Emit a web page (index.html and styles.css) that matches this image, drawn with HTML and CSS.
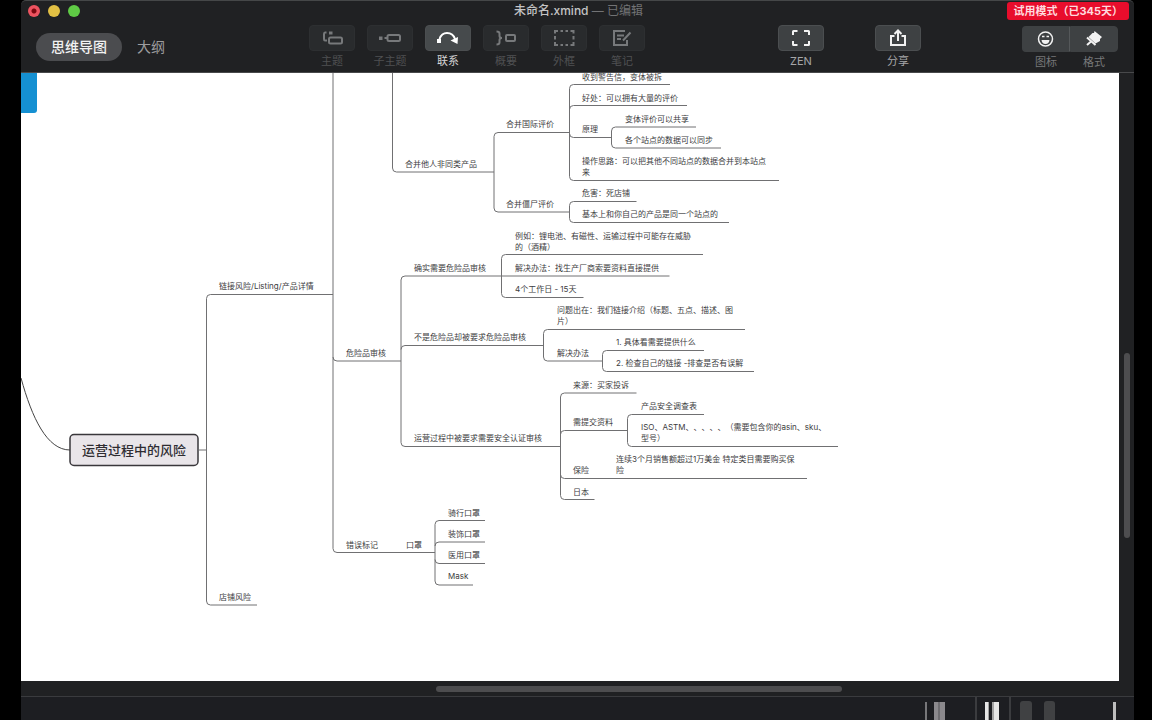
FILE: index.html
```html
<!DOCTYPE html>
<html lang="zh-CN">
<head>
<meta charset="utf-8">
<title>未命名.xmind</title>
<link rel="stylesheet" href="styles.css">
</head>
<body>
<div class="window">
  <header class="header">
    <div class="titlebar">
      <div class="lights">
        <button class="light light-close" aria-label="关闭"></button>
        <button class="light light-min" aria-label="最小化"></button>
        <button class="light light-max" aria-label="缩放"></button>
      </div>
      <h1 class="title">未命名.xmind <span class="edited">— 已编辑</span></h1>
      <div class="trial">试用模式（已345天）</div>
    </div>
    <div class="toolbar">
      <nav class="tabs">
        <button class="tab tab-active">思维导图</button>
        <button class="tab">大纲</button>
      </nav>
      <div class="tools">
        <button class="tool tool-off">
          <span class="key"><svg width="24" height="20" viewBox="0 0 24 20"><path d="M6.500 4.500H5Q4 4.500 4 6V11Q4 12.500 5 12.500H7"/><rect x="9" y="9.500" width="13" height="6" rx="1.500"/><path class="solid" d="M9 3.500h3.500v3H9z"/></svg></span>
          <span>主题</span>
        </button>
        <button class="tool tool-off">
          <span class="key"><svg width="24" height="20" viewBox="0 0 24 20"><path class="solid" d="M1 8.500h3.500V12H1z"/><path d="M6.500 10h3"/><rect x="9.500" y="7" width="12.500" height="6" rx="1.500"/></svg></span>
          <span>子主题</span>
        </button>
        <button class="tool tool-on">
          <span class="key"><svg width="24" height="20" viewBox="0 0 24 20"><path class="thick" d="M3.500 11Q5.500 5 11 5Q17 5 19 11"/><path class="solid" d="M1 11h4v4H1zM14.500 12.500l7.500-3.500-.5 7z"/></svg></span>
          <span>联系</span>
        </button>
        <button class="tool tool-off">
          <span class="key"><svg width="24" height="20" viewBox="0 0 24 20"><path d="M2.500 3.500Q5.500 3.500 5.500 5.500V8Q5.500 10 8 10Q5.500 10 5.500 12V14.500Q5.500 16.500 2.500 16.500"/><rect x="12" y="7" width="9" height="6" rx="1"/></svg></span>
          <span>概要</span>
        </button>
        <button class="tool tool-off">
          <span class="key"><svg width="24" height="20" viewBox="0 0 24 20"><path d="M3 5.500V3h3M8.500 3h2.500M13.500 3H16M18.500 3h3v2.500M21.500 8v3.500M21.500 14v3h-3M16 17h-2.500M11 17H8.500M6 17H3v-3M3 11.500V8"/></svg></span>
          <span>外框</span>
        </button>
        <button class="tool tool-off">
          <span class="key"><svg width="24" height="20" viewBox="0 0 24 20"><path d="M15 3H4V17H17V12M7 7.500h7M7 11h4M20.500 4.500L13 12.500"/></svg></span>
          <span>笔记</span>
        </button>
      </div>
      <div class="actions">
        <button class="tool">
          <span class="key"><svg width="24" height="20" viewBox="0 0 24 20"><path class="thick" d="M4 7V3.500Q4 3 4.500 3H8.500M15 3h4.500Q20 3 20 3.500V7M20 13v3.500Q20 17 19.500 17H15M8.500 17H4.500Q4 17 4 16.500V13"/></svg></span>
          <span>ZEN</span>
        </button>
        <button class="tool">
          <span class="key"><svg width="24" height="20" viewBox="0 0 24 20"><path class="thick" d="M8.500 8H5V17H19V8H15.500M12 13V3.500M8.500 6L12 2.500l3.500 3.500"/></svg></span>
          <span>分享</span>
        </button>
      </div>
      <div class="panels">
        <button class="panel">
          <span class="key"><svg width="24" height="20" viewBox="0 0 24 20"><circle cx="11.500" cy="10" r="7"/><path class="solid" d="M7.500 11h8q-.5 4-4 4t-4-4z"/><path d="M8 7.500h2.500M12.500 7.500H15"/></svg></span>
          <span>图标</span>
        </button>
        <button class="panel">
          <span class="key"><svg width="24" height="20" viewBox="0 0 24 20"><path class="solid" d="M12.500 2l7.500 6-2 2v2L13.500 14.500 6.500 8l4-4h1.500z"/><path class="thick" d="M5 8.500l8.500 7.500M9 12.500L5 16"/></svg></span>
          <span>格式</span>
        </button>
      </div>
    </div>
  </header>

  <main class="workspace">
    <svg class="canvas" role="img" aria-label="思维导图画布">
      <g transform="translate(-21 -73)">
        <path class="blue" d="M21 73H37V110Q37 113 34 113H21Z"/>

        <g class="links">
          <path class="main-link" d="M21 378C32 418 47 450 70 450"/>
          <path d="M199 450H206.500M333 294.500H210.500Q206.500 294.500 206.500 298.500V601Q206.500 605 210.500 605H257"/>
          <path d="M333 73V548.500Q333 552.500 337 552.500H435M333 357Q333 361 337 361H401"/>
          <path d="M392.500 73V168Q392.500 172 396.500 172H494"/>
          <path d="M569.500 132.500H498Q494 132.500 494 136.500V208Q494 212 498 212H569.500"/>
          <path d="M670 84.500H573.500Q569.500 84.500 569.500 88.500V176.500Q569.500 180.500 573.500 180.500H779M569.500 109.500Q569.500 105.500 573.500 105.500H687M569.500 133.500Q569.500 137.500 573.500 137.500H611.500"/>
          <path d="M696 127H615.500Q611.500 127 611.500 131V144Q611.500 148 615.500 148H721"/>
          <path d="M636.500 201.500H573.500Q569.500 201.500 569.500 205.500V218.500Q569.500 222.500 573.500 222.500H729"/>
          <path d="M669.500 276H405Q401 276 401 280V442.500Q401 446.500 405 446.500H560.500M401 349.500Q401 345.500 405 345.500H543.500"/>
          <path d="M703 254.500H505.500Q501.500 254.500 501.500 258.500V293.500Q501.500 297.500 505.500 297.500H583.500"/>
          <path d="M745 329.500H547.500Q543.500 329.500 543.500 333.500V357Q543.500 361 547.500 361H602.500"/>
          <path d="M704 350.500H606.500Q602.500 350.500 602.500 354.500V367.500Q602.500 371.500 606.500 371.500H754"/>
          <path d="M636.500 393H564.500Q560.500 393 560.500 397V495.500Q560.500 499.500 564.500 499.500H594.500M560.500 434.500Q560.500 430.500 564.500 430.500H627.500M560.500 474.500Q560.500 478.500 564.500 478.500H807"/>
          <path d="M704 414.500H631.500Q627.500 414.500 627.500 418.500V442.500Q627.500 446.500 631.500 446.500H838"/>
          <path d="M485 520.500H439Q435 520.500 435 524.500V581Q435 585 439 585H473M435 546Q435 542 439 542H485M435 559.500Q435 563.500 439 563.500H485"/>
        </g>

        <rect class="topic-box" x="70" y="434.500" width="128" height="31" rx="4"/>
        <text class="topic-main" x="134" y="455">运营过程中的风险</text>

        <g class="topics">
          <text x="219" y="289">链接风险/Listing/产品详情</text>
          <text x="219" y="600">店铺风险</text>
          <text x="346" y="356">危险品审核</text>
          <text x="346" y="548">错误标记</text>
          <text x="406" y="548">口罩</text>

          <text x="405" y="167">合并他人非同类产品</text>
          <text x="506" y="127">合并国际评价</text>
          <text x="506" y="207">合并僵尸评价</text>
          <text x="582" y="80">收到警告信，变体被拆</text>
          <text x="582" y="101">好处：可以拥有大量的评价</text>
          <text x="582" y="132">原理</text>
          <text x="625" y="122">变体评价可以共享</text>
          <text x="625" y="143">各个站点的数据可以同步</text>
          <text x="582" y="164">操作思路：可以把其他不同站点的数据合并到本站点<tspan x="582" dy="11">来</tspan></text>
          <text x="582" y="196">危害：死店铺</text>
          <text x="582" y="217">基本上和你自己的产品是同一个站点的</text>

          <text x="414" y="271">确实需要危险品审核</text>
          <text x="515" y="239">例如：锂电池、有磁性、运输过程中可能存在威胁<tspan x="515" dy="11">的（酒精）</tspan></text>
          <text x="515" y="271">解决办法：找生产厂商索要资料直接提供</text>
          <text x="515" y="292">4个工作日 - 15天</text>

          <text x="414" y="340">不是危险品却被要求危险品审核</text>
          <text x="557" y="313">问题出在：我们链接介绍（标题、五点、描述、图<tspan x="557" dy="11">片）</tspan></text>
          <text x="557" y="356">解决办法</text>
          <text x="616" y="345">1. 具体看需要提供什么</text>
          <text x="616" y="366">2. 检查自己的链接 -排查是否有误解</text>

          <text x="414" y="441">运营过程中被要求需要安全认证审核</text>
          <text x="573" y="388">来源：买家投诉</text>
          <text x="573" y="425">需提交资料</text>
          <text x="641" y="409">产品安全调查表</text>
          <text x="641" y="430">ISO、ASTM、、、、、（需要包含你的asin、sku、<tspan x="641" dy="11">型号）</tspan></text>
          <text x="573" y="473">保险</text>
          <text x="616" y="462">连续3个月销售额超过1万美金 特定类目需要购买保<tspan x="616" dy="11">险</tspan></text>
          <text x="573" y="495">日本</text>

          <text x="448" y="516">骑行口罩</text>
          <text x="448" y="537">装饰口罩</text>
          <text x="448" y="558">医用口罩</text>
          <text x="448" y="579">Mask</text>
        </g>
      </g>
    </svg>
    <div class="scroll-y"><div class="thumb-y"></div></div>
    <div class="scroll-x"><div class="thumb-x"></div></div>
  </main>

  <footer class="status">
    <svg width="212" height="23" viewBox="0 0 212 23" aria-hidden="true">
      <path fill="#77777a" d="M3 5h2v18H3z"/>
      <path fill="#8b898d" d="M12 5h11v18H12z"/>
      <path fill="#6d6c70" d="M16 5h2v18h-2z"/>
      <path fill="#3b3c3f" d="M53 0h2v23h-2zM87 0h2v23h-2z"/>
      <path fill="#e6e6e6" d="M63 5h4v18h-4zM70 5h7v18h-7z"/>
      <path fill="#a3a3a3" d="M66 5h1v18h-1zM70 5h2v18h-2z"/>
      <path fill="#404143" d="M98 23V7q0-3 3-3h6q3 0 3 3v16zM122 23V7q0-3 3-3h5q3 0 3 3v16z"/>
      <path fill="#bdbdbd" d="M191 5h3v18h-3z"/>
    </svg>
  </footer>
</div>
</body>
</html>
```

FILE: styles.css
```css
* {
  box-sizing: border-box;
}

body {
  margin: 0;
  padding: 0 18px 0 21px;
  background: #000;
  font-family: Inter, "Noto Sans CJK SC", sans-serif;
  text-spacing-trim: space-all;
}

button {
  margin: 0;
  padding: 0;
  border: 0;
  background: none;
  color: inherit;
  font: inherit;
}

.window {
  display: flex;
  flex-direction: column;
  height: 100vh;
  background: #202123;
  border-top: 1px solid #454748;
  border-radius: 5px 5px 0 0;
  overflow: hidden;
}

.header {
  border-bottom: 1px solid #48494b;
}

.titlebar {
  display: grid;
  grid-template-columns: 1fr auto 1fr;
  align-items: center;
  height: 20px;
  padding: 0 5px 0 7px;
}

.lights {
  display: flex;
  gap: 8px;
}

.light {
  width: 12px;
  height: 12px;
  border-radius: 50%;
}

.light-close {
  background: radial-gradient(circle, #7c0810 0 2px, #ed5360 3px);
}

.light-min {
  background: #e2c044;
}

.light-max {
  background: #5fcb45;
}

.title {
  margin: 0;
  color: #c4c4c5;
  font-size: 12px;
  font-weight: 500;
  line-height: 20px;
}

.edited {
  color: #727375;
  font-weight: 400;
}

.trial {
  justify-self: end;
  padding: 0 6px;
  border-radius: 3px;
  background: #e80d2c;
  color: #ffd9de;
  font-size: 11px;
  font-weight: 700;
  line-height: 18px;
  text-spacing-trim: normal;
  white-space: nowrap;
}

.toolbar {
  display: flex;
  align-items: flex-start;
  padding: 4px 16px 0 15px;
  height: 51px;
}

.tabs {
  display: flex;
  margin-top: 8px;
  gap: 15px;
}

.tab {
  height: 28px;
  border-radius: 14px;
  color: #9c9c9e;
  font-size: 14px;
  line-height: 28px;
}

.tab-active {
  padding: 0 15px;
  background: #4b4c4f;
  color: #f2f2f2;
  font-weight: 500;
}

.tools {
  display: flex;
  gap: 12px;
  margin-left: 144px;
}

.tool,
.panel {
  display: flex;
  flex-direction: column;
  align-items: center;
  gap: 1px;
  color: #a5a6a8;
  font-size: 11px;
  line-height: 18px;
}

.key {
  display: flex;
  align-items: center;
  justify-content: center;
  width: 46px;
  height: 26px;
  border: 1px solid #4b4e50;
  border-radius: 4px;
  background: #3e4143;
  color: #f2f2f2;
}

.key svg {
  fill: none;
  stroke: currentColor;
  stroke-width: 1.5;
}

.key .thick {
  stroke-width: 2;
}

.key .solid {
  fill: currentColor;
  stroke: none;
}

.tool-off {
  color: #4f5052;
}

.tool-off .key {
  border-color: #2d2f31;
  background: #292b2d;
  color: #77797b;
}

.tool-off svg {
  stroke-width: 2;
}

.tool-on {
  color: #d5d5d6;
}

.tool-on .key {
  background: #464a4c;
  color: #fff;
}

.actions {
  display: flex;
  gap: 51px;
  margin-left: auto;
}

.panels {
  display: flex;
  margin: 1px 0 0 101px;
}

.panel {
  color: #77787a;
}

.panel .key {
  width: 48px;
  border-color: #3e4143;
}

.panel:first-child .key {
  border-right-color: #55585a;
  border-radius: 4px 0 0 4px;
}

.panel:last-child .key {
  border-radius: 0 4px 4px 0;
}

.workspace {
  display: grid;
  flex: 1;
  grid-template-columns: 1fr 15px;
  grid-template-rows: 1fr 15px;
  min-height: 0;
}

.canvas {
  width: 100%;
  height: 100%;
  background: #fff;
  overflow: hidden;
}

.blue {
  fill: #1590d2;
}

.links {
  fill: none;
  stroke: #707072;
  stroke-width: 1;
}

.main-link {
  stroke: #444;
}

.topic-box {
  fill: #e9e5e9;
  stroke: #39373b;
  stroke-width: 1.5;
}

.topic-main {
  fill: #2e2c31;
  font-size: 13px;
  font-weight: 500;
  text-anchor: middle;
}

.topics {
  fill: #3c3c3e;
  font-size: 8px;
}

.scroll-y,
.scroll-x {
  display: flex;
  align-items: center;
}

.scroll-y {
  flex-direction: column;
}

.scroll-y::before {
  content: "";
  flex: 280;
}

.scroll-y::after {
  content: "";
  flex: 143;
}

.thumb-y {
  flex: 185;
  width: 6px;
  border-radius: 3px;
  background: #4d4d4f;
}

.scroll-x::before {
  content: "";
  flex: 415;
}

.scroll-x::after {
  content: "";
  flex: 277;
}

.thumb-x {
  flex: 406;
  height: 6px;
  border-radius: 3px;
  background: #4d4d4f;
}

.status {
  display: flex;
  justify-content: flex-end;
  height: 24px;
  border-top: 1px solid #3a3b3e;
  background: #1d1e22;
}
```
